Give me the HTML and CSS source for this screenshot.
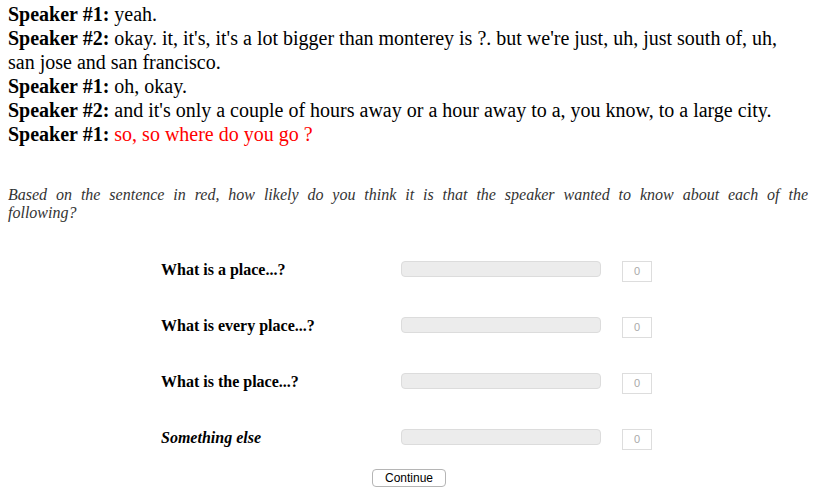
FILE: index.html
```html
<!DOCTYPE html>
<html>
<head>
<meta charset="utf-8">
<link rel="stylesheet" href="styles.css">
</head>
<body>
<div class="dialogue">
  <div class="turn"><b>Speaker #1:</b> yeah.</div>
  <div class="turn"><b>Speaker #2:</b> okay. it, it's, it's a lot bigger than monterey is ?. but we're just, uh, just south of, uh,<br>san jose and san francisco.</div>
  <div class="turn"><b>Speaker #1:</b> oh, okay.</div>
  <div class="turn"><b>Speaker #2:</b> and it's only a couple of hours away or a hour away to a, you know, to a large city.</div>
  <div class="turn"><b>Speaker #1:</b> <span class="target">so, so where do you go ?</span></div>
</div>
<p class="question"><span class="q-first">Based on the sentence in red, how likely do you think it is that the speaker wanted to know about each of the</span>following?</p>
<div class="rows">
  <div class="row">
    <div class="label">What is a place...?</div>
    <div class="track"></div>
    <div class="value">0</div>
  </div>
  <div class="row">
    <div class="label">What is every place...?</div>
    <div class="track"></div>
    <div class="value">0</div>
  </div>
  <div class="row">
    <div class="label">What is the place...?</div>
    <div class="track"></div>
    <div class="value">0</div>
  </div>
  <div class="row">
    <div class="label label-else">Something else</div>
    <div class="track"></div>
    <div class="value">0</div>
  </div>
</div>
<div class="actions">
  <button class="continue" type="button">Continue</button>
</div>
</body>
</html>
```
FILE: styles.css
```css
html, body {
  margin: 0;
  padding: 0;
  background: #fff;
}
body {
  padding: 2px 8px 0 8px;
  font-family: "Liberation Serif", "Times New Roman", serif;
  color: #000;
}
.dialogue {
  font-size: 20px;
  line-height: 24px;
}
.dialogue b {
  font-weight: bold;
}
.target {
  color: #ff0000;
}
.question {
  margin: 40px 2px 0 0;
  font-size: 16px;
  line-height: 18px;
  font-style: italic;
  color: #333;
  text-align: justify;
}
.q-first {
  display: block;
  text-align: justify;
  text-align-last: justify;
}
.rows {
  margin: 39px 0 0 153px;
  display: flex;
  flex-direction: column;
  gap: 35px;
}
.row {
  display: flex;
  align-items: flex-start;
  height: 21px;
}
.label {
  width: 240px;
  font-size: 16px;
  line-height: 18px;
  font-weight: bold;
}
.label-else {
  font-style: italic;
}
.track {
  width: 198px;
  height: 14px;
  background: #ececec;
  border: 1px solid #dcdcdc;
  border-radius: 4px;
}
.value {
  margin-left: 21px;
  width: 28px;
  height: 19px;
  border: 1px solid #dddddd;
  font-family: "Liberation Sans", Arial, sans-serif;
  font-size: 11px;
  line-height: 19px;
  text-align: center;
  color: #aaa;
}
.actions {
  margin-top: 19px;
  display: flex;
  justify-content: center;
}
.continue {
  width: 74px;
  height: 18px;
  padding: 0;
  background: #fff;
  border: 1px solid #b5b5b5;
  border-radius: 4px;
  font-family: "Liberation Sans", Arial, sans-serif;
  font-size: 12px;
  line-height: 16px;
  color: #000;
}
```
